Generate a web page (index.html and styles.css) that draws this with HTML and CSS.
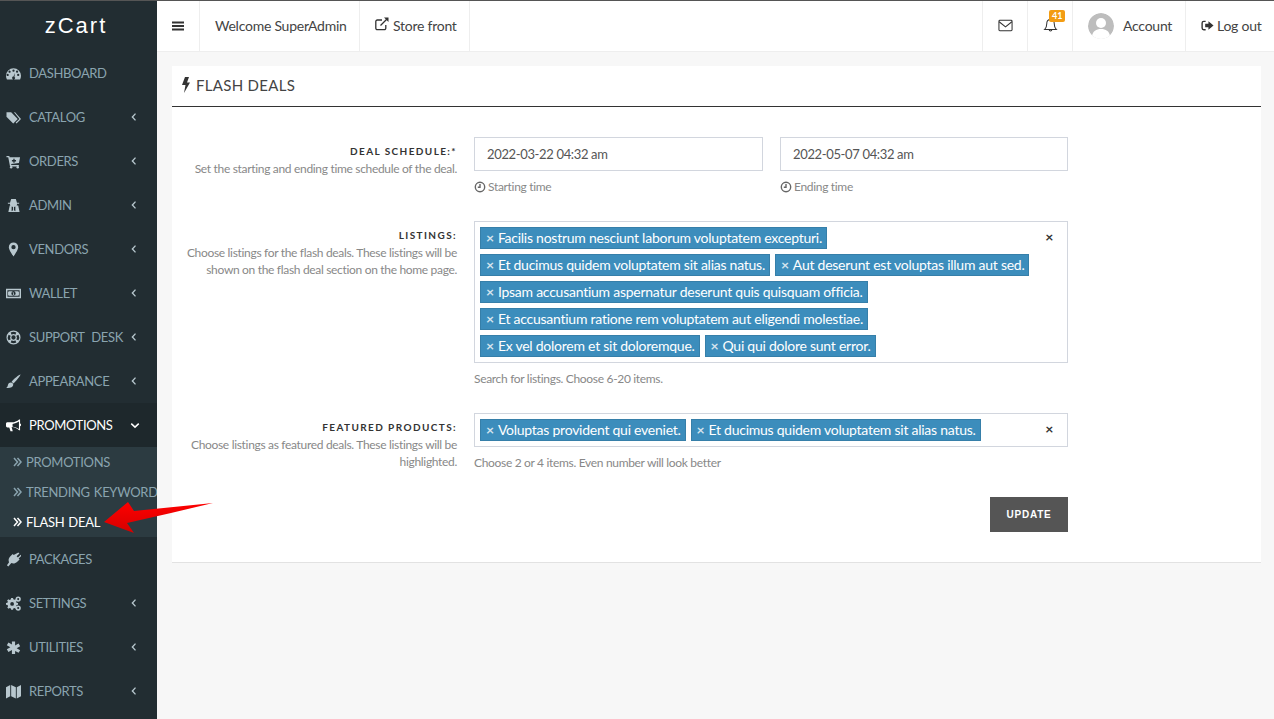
FILE: index.html
```html
<!DOCTYPE html>
<html lang="en">
<head>
    <meta charset="UTF-8">
    <title>zCart | Flash deals</title>
    <link rel="stylesheet" href="styles.css">
</head>
<body>
    <aside class="sidebar">
        <div class="logo">zCart</div>
        <ul class="menu">
            <li class="menu-item">
                <svg class="menu-icon" viewBox="0 0 16 16"><path fill-rule="evenodd" d="M8 2.500a8 8 0 0 1 8 8c0 1.500-.4 2.900-1 4H1c-.6-1.100-1-2.500-1-4a8 8 0 0 1 8-8zM3 9.500a1.200 1.200 0 1 0 0 .1zM5 6a1.200 1.200 0 1 0 0 .1zM9.200 5a1.200 1.200 0 1 0-2.400 0 1.200 1.200 0 0 0 2.400 0zM13 6a1.200 1.200 0 1 0-2.400 0 1.200 1.200 0 0 0 2.400 0zM14.200 9.500a1.200 1.200 0 1 0-2.400 0 1.200 1.200 0 0 0 2.400 0zM9.500 7.500l-1.500 3.800a1.500 1.500 0 1 0 1 .3z"/></svg>
                <span>DASHBOARD</span>
            </li>
            <li class="menu-item">
                <svg class="menu-icon" viewBox="0 0 16 16"><path d="M.5 2.500h5l7 7-4.800 4.800-7.200-7z"/><path d="M8.500 2.500h1.200l6.300 7-4.800 4.800-.9-.9 4-3.900z"/></svg>
                <span>CATALOG</span>
                <svg class="chevron" viewBox="0 0 8 12"><path d="M6 1.500 1.800 6 6 10.500"/></svg>
            </li>
            <li class="menu-item">
                <svg class="menu-icon" viewBox="0 0 16 16"><path fill-rule="evenodd" d="M.5 2h3l.4 1.500H15l-1.200 6.200-8.300 1 .2 1h8v1.500H4.300L2.400 3.500H.5zM7.800 5v1.500H6.300v1.400h1.500v1.500h1.400V7.900h1.500V6.500H9.200V5z"/><circle cx="5.500" cy="14.200" r="1.300"/><circle cx="12.500" cy="14.200" r="1.300"/></svg>
                <span>ORDERS</span>
                <svg class="chevron" viewBox="0 0 8 12"><path d="M6 1.500 1.800 6 6 10.500"/></svg>
            </li>
            <li class="menu-item">
                <svg class="menu-icon" viewBox="0 0 16 16"><path fill-rule="evenodd" d="M5.500 1h5l1.200 4H14v1.200h-2.200c0 .8-.2 1.300-.5 1.800H13l1.500 7h-12L4 8h.7c-.3-.5-.5-1-.5-1.800H2V5h2.300zM6 9v5l1.500-1V9.500zM10 9l-1.500.5V13l1.500 1z"/></svg>
                <span>ADMIN</span>
                <svg class="chevron" viewBox="0 0 8 12"><path d="M6 1.500 1.800 6 6 10.500"/></svg>
            </li>
            <li class="menu-item">
                <svg class="menu-icon" viewBox="0 0 16 16"><path fill-rule="evenodd" d="M8 .5a5 5 0 0 1 5 5c0 2.300-3 7-5 10-2-3-5-7.700-5-10a5 5 0 0 1 5-5zm0 2.700a2.300 2.300 0 1 0 0 4.600 2.300 2.300 0 0 0 0-4.600z"/></svg>
                <span>VENDORS</span>
                <svg class="chevron" viewBox="0 0 8 12"><path d="M6 1.500 1.800 6 6 10.500"/></svg>
            </li>
            <li class="menu-item">
                <svg class="menu-icon" viewBox="0 0 16 16"><path fill-rule="evenodd" d="M0 3h16v10H0zm1.500 1.500v7h13v-7zM3 5.500h10l.8.8v3.400l-.8.8H3l-.8-.8V6.300zM8 5.700a2.300 2.300 0 1 0 0 4.600 2.300 2.300 0 0 0 0-4.600zM7 6.800h1.500v2.400h.6v.6H7v-.6h.7V7.500H7z"/></svg>
                <span>WALLET</span>
                <svg class="chevron" viewBox="0 0 8 12"><path d="M6 1.500 1.800 6 6 10.500"/></svg>
            </li>
            <li class="menu-item">
                <svg class="menu-icon" viewBox="0 0 16 16"><path fill-rule="evenodd" d="M8 .5a7.500 7.500 0 1 1 0 15 7.500 7.500 0 0 1 0-15zM5 2.700l1 2.300a3.400 3.400 0 0 1 4 0l1-2.300a6 6 0 0 0-6 0zM2.700 5A6 6 0 0 0 2.700 11L5 10a3.400 3.400 0 0 1 0-4zm10.600 0L11 6a3.400 3.400 0 0 1 0 4l2.300 1a6 6 0 0 0 0-6zM6 11l-1 2.300a6 6 0 0 0 6 0L10 11a3.400 3.400 0 0 1-4 0zm2-5.300a2.300 2.300 0 1 0 0 4.600 2.300 2.300 0 0 0 0-4.600z"/></svg>
                <span>SUPPORT DESK</span>
                <svg class="chevron" viewBox="0 0 8 12"><path d="M6 1.500 1.800 6 6 10.500"/></svg>
            </li>
            <li class="menu-item">
                <svg class="menu-icon" viewBox="0 0 16 16"><path d="M15.500.5c.5.500-4.800 7.500-7.500 9.500L6 8.200C8 5.200 15-.1 15.500.5z"/><path d="M5.300 9c1.400 0 2.600 1 2.400 2.800-.2 2.500-3.800 3.500-7.500 3 1.500-.8 1.600-1.800 2-3.500C2.500 10 3.800 9 5.300 9z"/></svg>
                <span>APPEARANCE</span>
                <svg class="chevron" viewBox="0 0 8 12"><path d="M6 1.500 1.800 6 6 10.500"/></svg>
            </li>
            <li class="menu-item active">
                <svg class="menu-icon" viewBox="0 0 16 16"><path fill-rule="evenodd" d="M14 1.500h1v4.300a1.500 1.500 0 0 1 0 2.900v4.300h-1c-2-2-5-3.300-8-3.500l1.200 4.500H4.800L3.500 10H1.500C.7 10 0 9.300 0 8.500V6C0 5.200.7 4.500 1.500 4.500H6c3 0 6-1 8-3zm-.2 2.300C12 5 9.500 6 7 6.300v3c2.500.3 5 1.300 6.800 2.500z"/></svg>
                <span>PROMOTIONS</span>
                <svg class="chevron down" viewBox="0 0 12 8"><path d="M1.500 1.800 6 6l4.500-4.200"/></svg>
            </li>
            <li>
                <ul class="submenu">
                    <li class="sub-item">
                        <svg class="double-angle" viewBox="0 0 9 10"><path d="M1 1l3.500 4L1 9M4.500 1 8 5l-3.500 4"/></svg>
                        <span>PROMOTIONS</span>
                    </li>
                    <li class="sub-item">
                        <svg class="double-angle" viewBox="0 0 9 10"><path d="M1 1l3.500 4L1 9M4.500 1 8 5l-3.500 4"/></svg>
                        <span>TRENDING KEYWORDS</span>
                    </li>
                    <li class="sub-item current">
                        <svg class="double-angle" viewBox="0 0 9 10"><path d="M1 1l3.500 4L1 9M4.500 1 8 5l-3.500 4"/></svg>
                        <span>FLASH DEAL</span>
                    </li>
                </ul>
            </li>
            <li class="menu-item">
                <svg class="menu-icon" viewBox="0 0 16 16"><path d="M13.200.5l1.100 1-3 3 1.400 1.400 3-3 .8 1-3 3 1 1-2.500 2.500c-2 2-4.500 2.400-6.300 1.400L2.500 15.500 1 14l2.300-3.100c-1-1.800-.6-4.300 1.400-6.300l2.500-2.500 1 1z"/></svg>
                <span>PACKAGES</span>
            </li>
            <li class="menu-item">
                <svg class="menu-icon" viewBox="0 0 16 16"><path fill-rule="evenodd" d="M5.500 3.500h2l.3 1.500 1.200.6 1.400-.7 1.200 1.300-.8 1.300.5 1.200 1.500.3v1.900l-1.500.3-.5 1.200.8 1.300-1.300 1.300-1.300-.8-1.200.5-.3 1.500h-2l-.3-1.500-1.200-.5-1.300.8-1.300-1.300.8-1.300-.5-1.200L0 10.900V9l1.500-.3.5-1.200-.8-1.300 1.300-1.300 1.300.8 1.200-.6zM6.500 8a2 2 0 1 0 0 4 2 2 0 0 0 0-4z" transform="translate(0 -1.500)"/><path fill-rule="evenodd" d="M13 .5a2.800 2.800 0 1 1 0 5.600 2.800 2.800 0 0 1 0-5.600zm0 1.700a1.100 1.100 0 1 0 0 2.200 1.100 1.100 0 0 0 0-2.200zM13 10a2.800 2.800 0 1 1 0 5.600 2.800 2.800 0 0 1 0-5.600zm0 1.700a1.100 1.100 0 1 0 0 2.200 1.100 1.100 0 0 0 0-2.200z"/></svg>
                <span>SETTINGS</span>
                <svg class="chevron" viewBox="0 0 8 12"><path d="M6 1.500 1.800 6 6 10.500"/></svg>
            </li>
            <li class="menu-item">
                <svg class="menu-icon" viewBox="0 0 16 16"><path d="M6.300 1.500h3.400v4.300l3.700-2.100 1.700 2.900L11.400 8.700l3.700 2.100-1.700 2.900-3.700-2.100V15H6.300v-4.400l-3.700 2.100L.9 9.800l3.700-2.100L.9 5.600l1.700-2.900 3.700 2.100z"/></svg>
                <span>UTILITIES</span>
                <svg class="chevron" viewBox="0 0 8 12"><path d="M6 1.500 1.800 6 6 10.500"/></svg>
            </li>
            <li class="menu-item">
                <svg class="menu-icon" viewBox="0 0 16 16"><path d="M0 3.500 4.500 1v12L0 15.500zM5.500 1 10.500 3.500v12L5.500 13zM11.500 3.500 16 1v12l-4.500 2.500z"/></svg>
                <span>REPORTS</span>
                <svg class="chevron" viewBox="0 0 8 12"><path d="M6 1.500 1.800 6 6 10.500"/></svg>
            </li>
        </ul>
    </aside>

    <div class="main">
        <header class="topbar">
            <div class="top-cell burger">
                <svg class="top-icon" viewBox="0 0 14 14"><path d="M1 2.500h12v2H1zM1 6h12v2H1zM1 9.500h12v2H1z"/></svg>
            </div>
            <div class="top-cell welcome">Welcome SuperAdmin</div>
            <div class="top-cell store">
                <svg class="store-icon" viewBox="0 0 14 14"><path d="M10.800 8v3.200a1.500 1.500 0 0 1-1.500 1.500H2.300a1.500 1.500 0 0 1-1.500-1.500V4.500A1.500 1.500 0 0 1 2.300 3H7M5.500 8.500l7-7"/><path class="solid" d="M9 .5h4.500V5z"/></svg>
                <span>Store front</span>
            </div>
            <div class="top-spacer"></div>
            <div class="top-cell mail">
                <svg class="line-icon" viewBox="0 0 16 14"><rect x="1" y="1.500" width="14" height="11" rx="1"/><path d="M1.200 3 8 8.500 14.800 3"/></svg>
            </div>
            <div class="top-cell bell">
                <svg class="line-icon" viewBox="0 0 14 16"><path d="M7 1.500c-2.800 0-4 2-4 4.500 0 3-1 5-2.300 6.300h12.600C12 11 11 9 11 6c0-2.500-1.200-4.500-4-4.500zM5.600 12.500a1.400 1.400 0 0 0 2.800 0"/></svg>
                <span class="badge">41</span>
            </div>
            <div class="top-cell account">
                <svg class="avatar" viewBox="0 0 26 26"><circle cx="13" cy="13" r="13" fill="#bdbdbd"/><circle cx="13" cy="10" r="5" fill="#fff"/><path d="M4 23c1-5 4-7 9-7s8 2 9 7a13 13 0 0 1-18 0z" fill="#fff"/></svg>
                <span>Account</span>
            </div>
            <div class="top-cell logout">
                <svg class="logout-icon" viewBox="0 0 14 14"><path d="M5 2.500H3a1.800 1.800 0 0 0-1.800 1.800v5.400A1.800 1.800 0 0 0 3 11.500h2" fill="none" stroke="#333" stroke-width="1.500"/><path d="M8 2.500 13.500 7 8 11.500V9H4.500V5H8z"/></svg>
                <span>Log out</span>
            </div>
        </header>

        <main class="content">
            <section class="card">
                <h1 class="card-title">
                    <svg class="bolt" viewBox="0 0 8 16"><path d="M3 0h4L5 5.500h3L2 16l1.500-8H0z"/></svg>
                    FLASH DEALS
                </h1>
                <form class="deal-form">
                    <div class="form-row">
                        <div class="label-col">
                            <label>DEAL SCHEDULE:*</label>
                            <p>Set the starting and ending time schedule of the deal.</p>
                        </div>
                        <div class="field-col date-grid">
                            <div>
                                <div class="text-input">2022-03-22 04:32 am</div>
                                <div class="hint">
                                    <svg class="clock" viewBox="0 0 12 12"><circle cx="6" cy="6" r="4.700"/><path d="M6 3v3.300H3.800"/></svg>
                                    Starting time
                                </div>
                            </div>
                            <div>
                                <div class="text-input">2022-05-07 04:32 am</div>
                                <div class="hint">
                                    <svg class="clock" viewBox="0 0 12 12"><circle cx="6" cy="6" r="4.700"/><path d="M6 3v3.300H3.800"/></svg>
                                    Ending time
                                </div>
                            </div>
                        </div>
                    </div>

                    <div class="form-row">
                        <div class="label-col">
                            <label>LISTINGS:</label>
                            <p>Choose listings for the flash deals. These listings will be shown on the flash deal section on the home page.</p>
                        </div>
                        <div class="field-col">
                            <div class="tag-box">
                                <span class="tag"><i>×</i>Facilis nostrum nesciunt laborum voluptatem excepturi.</span>
                                <span class="tag"><i>×</i>Et ducimus quidem voluptatem sit alias natus.</span>
                                <span class="tag"><i>×</i>Aut deserunt est voluptas illum aut sed.</span>
                                <span class="tag"><i>×</i>Ipsam accusantium aspernatur deserunt quis quisquam officia.</span>
                                <span class="tag"><i>×</i>Et accusantium ratione rem voluptatem aut eligendi molestiae.</span>
                                <span class="tag"><i>×</i>Ex vel dolorem et sit doloremque.</span>
                                <span class="tag"><i>×</i>Qui qui dolore sunt error.</span>
                                <b class="clear">×</b>
                            </div>
                            <div class="hint">Search for listings. Choose 6-20 items.</div>
                        </div>
                    </div>

                    <div class="form-row">
                        <div class="label-col">
                            <label>FEATURED PRODUCTS:</label>
                            <p>Choose listings as featured deals. These listings will be highlighted.</p>
                        </div>
                        <div class="field-col">
                            <div class="tag-box">
                                <span class="tag"><i>×</i>Voluptas provident qui eveniet.</span>
                                <span class="tag"><i>×</i>Et ducimus quidem voluptatem sit alias natus.</span>
                                <b class="clear">×</b>
                            </div>
                            <div class="hint">Choose 2 or 4 items. Even number will look better</div>
                        </div>
                    </div>

                    <div class="form-row">
                        <div></div>
                        <div class="field-col actions">
                            <button type="button" class="btn-update">UPDATE</button>
                        </div>
                    </div>
                </form>
            </section>
        </main>
    </div>

    <!-- red arrow pointing at the current menu entry -->
    <svg class="callout-arrow" viewBox="0 0 120 40">
        <defs>
            <linearGradient id="arrowFill" x1="0" y1="0" x2="0" y2="1">
                <stop offset="0" stop-color="#ff0000"/>
                <stop offset="1" stop-color="#d40000"/>
            </linearGradient>
        </defs>
        <path d="M112 4 33 12 27 3 3 23 33 34 26 24 70 14z" fill="url(#arrowFill)"/>
    </svg>
</body>
</html>
```

FILE: styles.css
```css
* {
    margin: 0;
    padding: 0;
    box-sizing: border-box;
}

body {
    display: flex;
    height: 719px;
    overflow: hidden;
    border-top: 1px solid #555;
    background-color: #f7f7f7;
    font-family: Lato, 'Noto Sans', sans-serif;
    font-size: 14px;
    letter-spacing: -0.25px;
    color: #444;
}

ul {
    list-style: none;
}

/* Sidebar */
.sidebar {
    width: 157px;
    flex-shrink: 0;
    overflow: hidden;
    background-color: #222d32;
}

.logo {
    height: 50px;
    padding-right: 5px;
    line-height: 50px;
    text-align: center;
    font-family: 'Liberation Sans', sans-serif;
    font-size: 22px;
    letter-spacing: 2px;
    color: #fff;
}

.menu-item {
    display: flex;
    align-items: center;
    height: 44px;
    padding-left: 6px;
    font-size: 13px;
    letter-spacing: -0.35px;
    word-spacing: 4px;
    color: #8aa4af;
    white-space: nowrap;
}

.menu-item.active {
    background-color: #1e282c;
    color: #fff;
}

.menu-icon {
    width: 15px;
    height: 15px;
    margin-right: 8px;
    flex-shrink: 0;
    fill: #b8c7ce;
}

.active .menu-icon {
    fill: #fff;
}

.chevron {
    width: 6px;
    height: 10px;
    margin-left: auto;
    margin-right: 20px;
    flex-shrink: 0;
    fill: none;
    stroke: #b8c7ce;
    stroke-width: 1.8;
}

.chevron.down {
    width: 10px;
    height: 7px;
    margin-right: 17px;
    stroke: #fff;
}

.submenu {
    background-color: #2c3b41;
}

.sub-item {
    display: flex;
    align-items: center;
    height: 30px;
    padding-left: 13px;
    font-size: 13px;
    letter-spacing: -0.3px;
    word-spacing: 1px;
    color: #8aa4af;
    white-space: nowrap;
}

.sub-item.current {
    color: #fff;
}

.double-angle {
    width: 9px;
    height: 10px;
    margin-right: 4px;
    flex-shrink: 0;
    fill: none;
    stroke: currentColor;
    stroke-width: 1.5;
}

/* Top bar */
.main {
    flex: 1;
    min-width: 0;
}

.topbar {
    display: flex;
    height: 52px;
    margin-top: -1px;
    background-color: #fff;
    border-bottom: 1px solid #eee;
    color: #444;
}

.top-cell {
    display: flex;
    align-items: center;
    position: relative;
    border-right: 1px solid #eee;
}

.top-spacer {
    flex: 1;
    border-right: 1px solid #eee;
}

.burger {
    width: 43px;
    justify-content: center;
}

.top-icon {
    width: 14px;
    height: 14px;
    fill: #333;
}

.welcome {
    width: 160px;
    padding-left: 15px;
}

.store {
    width: 110px;
    padding-left: 15px;
}

.store-icon {
    width: 14px;
    height: 14px;
    margin-right: 4px;
    margin-top: -3px;
    fill: none;
    stroke: #333;
    stroke-width: 1.3;
}

.store-icon .solid {
    fill: #333;
    stroke: none;
}

.line-icon {
    width: 15px;
    height: 15px;
    fill: none;
    stroke: #333;
    stroke-width: 1.1;
}

.mail,
.bell {
    width: 45px;
    justify-content: center;
}

.badge {
    position: absolute;
    top: 10px;
    left: 21px;
    min-width: 16px;
    height: 12px;
    padding: 0 3px;
    border-radius: 2px;
    background-color: #f39c12;
    color: #fff;
    font-size: 9px;
    font-weight: 700;
    line-height: 12px;
    letter-spacing: 0;
    text-align: center;
}

.account {
    width: 113px;
    padding-left: 15px;
}

.avatar {
    width: 26px;
    height: 26px;
    margin-right: 9px;
    border-radius: 50%;
}

.logout {
    flex: 0 0 88px;
    padding-left: 15px;
    border-right: 0;
}

.logout-icon {
    width: 13px;
    height: 13px;
    margin-right: 3px;
    fill: #333;
}

/* Content */
.content {
    padding: 14px 13px 0 15px;
}

.card {
    height: 497px;
    background-color: #fff;
    border-bottom: 1px solid #e2e2e2;
}

.card-title {
    display: flex;
    align-items: center;
    height: 41px;
    padding: 0 0 2px 10px;
    border-bottom: 1px solid #333;
    font-size: 15px;
    font-weight: 400;
    letter-spacing: 0.3px;
    color: #444;
}

.bolt {
    width: 8px;
    height: 16px;
    margin-right: 6px;
    fill: #333;
}

.deal-form {
    padding-top: 30px;
}

.form-row {
    display: grid;
    grid-template-columns: 285px 594px;
    column-gap: 17px;
    margin-bottom: 26px;
}

.label-col {
    text-align: right;
}

.label-col label {
    display: block;
    margin-top: 7px;
    font-size: 10px;
    font-weight: 700;
    line-height: 14px;
    letter-spacing: 1.4px;
    color: #333;
}

.label-col p {
    margin-top: 2px;
    font-size: 12px;
    line-height: 17px;
    letter-spacing: -0.32px;
    color: #888;
}

.date-grid {
    display: grid;
    grid-template-columns: 289px 288px;
    column-gap: 17px;
}

.text-input {
    height: 34px;
    padding-left: 12px;
    border: 1px solid #d2d6de;
    font-size: 13px;
    line-height: 32px;
    letter-spacing: -0.35px;
    color: #555;
}

.hint {
    display: flex;
    align-items: center;
    margin-top: 7px;
    font-size: 12px;
    line-height: 17px;
    letter-spacing: -0.32px;
    color: #888;
}

.clock {
    width: 12px;
    height: 12px;
    margin-right: 2px;
    fill: none;
    stroke: #666;
    stroke-width: 1.4;
}

.tag-box {
    display: flex;
    flex-wrap: wrap;
    gap: 5px;
    position: relative;
    padding: 5px 30px 5px 5px;
    border: 1px solid #d2d6de;
}

.tag {
    height: 22px;
    padding: 0 4px;
    border: 1px solid #367fa9;
    background-color: #3c8dbc;
    color: #fff;
    line-height: 20px;
    white-space: nowrap;
}

.tag i {
    margin-right: 4px;
    margin-left: 1px;
    font-style: normal;
    font-weight: 700;
    color: #d5e4ee;
}

.clear {
    position: absolute;
    top: 5px;
    right: 14px;
    font-size: 14px;
    line-height: 20px;
    color: #333;
}

.actions {
    display: flex;
    justify-content: flex-end;
}

.btn-update {
    width: 78px;
    height: 35px;
    border: 0;
    background-color: #555;
    color: #fff;
    font-family: 'Liberation Sans', sans-serif;
    font-size: 10px;
    font-weight: 700;
    letter-spacing: 0.8px;
}

.callout-arrow {
    position: absolute;
    top: 499px;
    left: 101px;
    width: 120px;
    height: 40px;
}
```
